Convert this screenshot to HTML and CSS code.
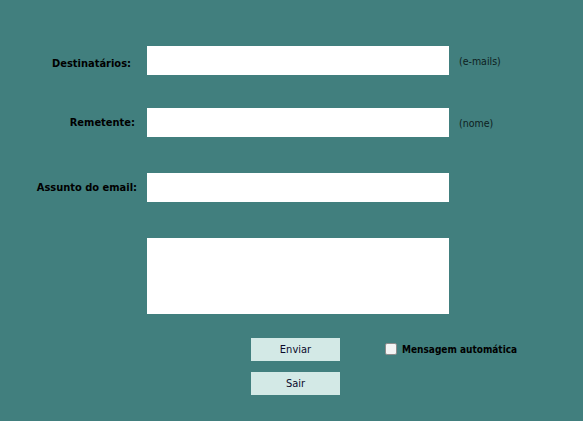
FILE: index.html
```html
<!DOCTYPE html>
<html lang="pt">
<head>
<meta charset="utf-8">
<link rel="stylesheet" href="styles.css">
</head>
<body>
<form class="form">
  <div class="row">
    <label class="label label-dest">Destinatários:</label>
    <input class="field" type="text">
    <span class="note">(e-mails)</span>
  </div>
  <div class="row row-gap-33">
    <label class="label label-rem">Remetente:</label>
    <input class="field" type="text">
    <span class="note">(nome)</span>
  </div>
  <div class="row row-gap-36">
    <label class="label label-ass">Assunto do email:</label>
    <input class="field" type="text">
  </div>
  <div class="row row-gap-36 row-area">
    <span class="label"></span>
    <textarea class="area"></textarea>
  </div>
  <div class="actions">
    <div class="buttons">
      <button type="button" class="btn">Enviar</button>
      <button type="button" class="btn">Sair</button>
    </div>
    <label class="check">
      <span class="box"></span>
      <span class="check-text">Mensagem automática</span>
    </label>
  </div>
</form>
</body>
</html>
```

FILE: styles.css
```css
html, body {
  margin: 0;
  padding: 0;
}
body {
  background: #417f7e;
  width: 583px;
  height: 421px;
  overflow: hidden;
  font-family: "DejaVu Sans Condensed", "DejaVu Sans", sans-serif;
  font-size: 11px;
  color: #000;
}
.form {
  display: flex;
  flex-direction: column;
  padding-top: 46px;
}
.row {
  display: flex;
  align-items: center;
  height: 29px;
}
.row-gap-33 { margin-top: 33px; }
.row-gap-36 { margin-top: 36px; }
.row-area { height: 76px; }
.label {
  width: 147px;
  box-sizing: border-box;
  text-align: right;
  font-weight: bold;
  font-size: 11px;
}
.label-dest { padding-right: 16px; padding-top: 6px; }
.label-rem { padding-right: 12px; }
.label-ass { padding-right: 10px; }
.field, .area {
  width: 302px;
  height: 29px;
  box-sizing: border-box;
  border: none;
  background: #fff;
  margin: 0;
  padding: 0 4px;
  outline: none;
  font: inherit;
}
.area {
  height: 76px;
  resize: none;
}
.note {
  margin-left: 10px;
  color: #0d1d1d;
  font-size: 10.5px;
}
.actions {
  display: flex;
  align-items: flex-start;
  margin-top: 24px;
  padding-left: 251px;
}
.buttons {
  display: flex;
  flex-direction: column;
  gap: 11px;
}
.btn {
  width: 89px;
  height: 23px;
  border: none;
  margin: 0;
  padding: 0;
  background: #d3e9e6;
  color: #0a0a2a;
  font-family: "DejaVu Sans Condensed", "DejaVu Sans", sans-serif;
  font-size: 11px;
}
.check {
  display: flex;
  align-items: center;
  margin-left: 45px;
  margin-top: 5px;
  height: 12px;
}
.box {
  width: 12px;
  height: 12px;
  box-sizing: border-box;
  border: 1px solid #8c8c8c;
  border-radius: 2px;
  background: #f4f4f4;
}
.check-text {
  margin-left: 5px;
  font-weight: bold;
  font-size: 10px;
}
```
